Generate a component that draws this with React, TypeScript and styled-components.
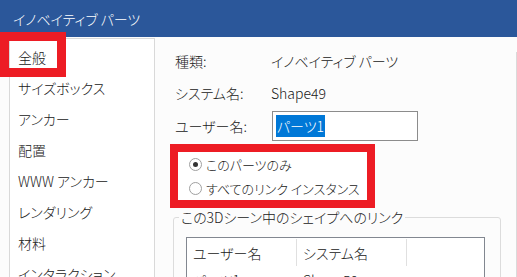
import React, { FC } from 'react'
import styled, { createGlobalStyle } from 'styled-components'

const GlobalStyle = createGlobalStyle`
	body {
		margin: 0;
		background: #fcfcfc;
		font-family: 'Noto Sans CJK JP', 'Noto Sans', sans-serif;
		font-feature-settings: 'palt';
		font-weight: 300;
		color: #202020;
	}
`

const Window = styled.div`
	width: 517px;
	height: 277px;
	overflow: hidden;
	display: flex;
	flex-direction: column;
	background: #fcfcfc;
`

const TitleBar = styled.div`
	height: 37px;
	flex: none;
	display: flex;
	align-items: center;
	padding-left: 13px;
	background: #2b579a;
	color: #ffffff;
	font-size: 14px;
`

const Body = styled.div`
	flex: 1;
	display: flex;
	min-height: 0;
`

const Nav = styled.ul`
	list-style: none;
	margin: 1px 0 0 9px;
	padding: 3px 0 0;
	width: 146px;
	box-sizing: border-box;
	border: 1px solid #d9d9d9;
	border-bottom: none;
	background: #ffffff;
`

const NavItem = styled.li<{ $marked?: boolean }>`
	position: relative;
	height: 31px;
	line-height: 31px;
	padding-left: 8px;
	font-size: 14px;
	white-space: nowrap;

	&::after {
		content: '';
		display: ${({ $marked }) => ($marked ? 'block' : 'none')};
		position: absolute;
		left: -10px;
		top: -10px;
		width: 66px;
		height: 45px;
		box-sizing: border-box;
		border: 9px solid #ed1c24;
	}
`

const Content = styled.div`
	flex: 1;
	padding: 8px 0 0 20px;
	min-width: 0;
`

const EdgeLine = styled.div`
	width: 1px;
	margin-top: 15px;
	background: #dadada;
`

const Field = styled.div<{ $h: number }>`
	display: flex;
	align-items: center;
	height: ${({ $h }) => $h}px;
	font-size: 14px;
`

const Label = styled.span`
	width: 96px;
	flex: none;
`

const NameBox = styled.div`
	width: 146px;
	height: 30px;
	box-sizing: border-box;
	margin-left: 1px;
	border: 1px solid #8c8c8c;
	background: #ffffff;
	display: flex;
	align-items: center;
	padding-left: 3px;
`

const Selected = styled.span`
	background: #0078d7;
	color: #ffffff;
	line-height: 22px;
	padding: 0 1px;
`

const Choices = styled.div`
	margin: 1px 0 0 -5px;
	width: 205px;
	box-sizing: border-box;
	border: 8px solid #ed1c24;
	background: #ffffff;
	padding: 0 0 0 11px;
`

const Choice = styled.label`
	display: flex;
	align-items: center;
	height: 24px;
	font-size: 13px;
	gap: 4px;
	white-space: nowrap;
`

const Radio = styled.span<{ $on?: boolean }>`
	flex: none;
	width: 13px;
	height: 13px;
	box-sizing: border-box;
	border-radius: 50%;
	border: 1px solid #a0a0a0;
	background: #ffffff;
	display: flex;
	align-items: center;
	justify-content: center;

	&::before {
		content: '';
		width: 5px;
		height: 5px;
		border-radius: 50%;
		background: ${({ $on }) => ($on ? '#333333' : 'transparent')};
	}
`

const Group = styled.fieldset`
	margin: 0 0 0 -2px;
	padding: 0;
	width: 328px;
	box-sizing: border-box;
	border: 1px solid #dcdcdc;
	border-radius: 3px;
	height: 80px;
`

const Legend = styled.legend`
	margin-left: 5px;
	padding: 0 2px;
	font-size: 14px;
	line-height: 18px;
`

const Table = styled.div`
	margin: 11px 0 0 12px;
	width: 299px;
	height: 60px;
	box-sizing: border-box;
	border: 1px solid #828790;
	border-bottom: none;
	background: #ffffff;
	display: grid;
	grid-template-columns: 110px 110px 1fr;
	grid-auto-rows: 28px;
	font-size: 14px;
`

const HeadCell = styled.div<{ $last?: boolean }>`
	display: flex;
	align-items: center;
	padding-left: 6px;
	border-right: ${({ $last }) => ($last ? 'none' : '1px solid #e0e0e0')};
	margin: 1px 0 0;
`

const Cell = styled.div`
	display: flex;
	align-items: center;
	padding-left: 6px;
`

const navItems = ['全般', 'サイズボックス', 'アンカー', '配置', 'WWW アンカー', 'レンダリング', '材料', 'インタラクション']

const App: FC = () => (
	<Window>
		<GlobalStyle />
		<TitleBar>イノベイティブ パーツ</TitleBar>
		<Body>
			<Nav>
				{navItems.map((item, i) => (
					<NavItem key={item} $marked={i === 0}>
						{item}
					</NavItem>
				))}
			</Nav>
			<Content>
				<Field $h={32}>
					<Label>種類:</Label>
					<span>イノベイティブ パーツ</span>
				</Field>
				<Field $h={32}>
					<Label>システム名:</Label>
					<span>Shape49</span>
				</Field>
				<Field $h={34}>
					<Label>ユーザー名:</Label>
					<NameBox>
						<Selected>パーツ1</Selected>
					</NameBox>
				</Field>
				<Choices>
					<Choice>
						<Radio $on />
						このパーツのみ
					</Choice>
					<Choice>
						<Radio />
						すべてのリンク インスタンス
					</Choice>
				</Choices>
				<Group>
					<Legend>この3Dシーン中のシェイプへのリンク</Legend>
					<Table>
						<HeadCell>ユーザー名</HeadCell>
						<HeadCell>システム名</HeadCell>
						<HeadCell $last />
						<Cell>パーツ1</Cell>
						<Cell>Shape50</Cell>
						<Cell />
					</Table>
				</Group>
			</Content>
			<EdgeLine />
		</Body>
	</Window>
)

export default App
